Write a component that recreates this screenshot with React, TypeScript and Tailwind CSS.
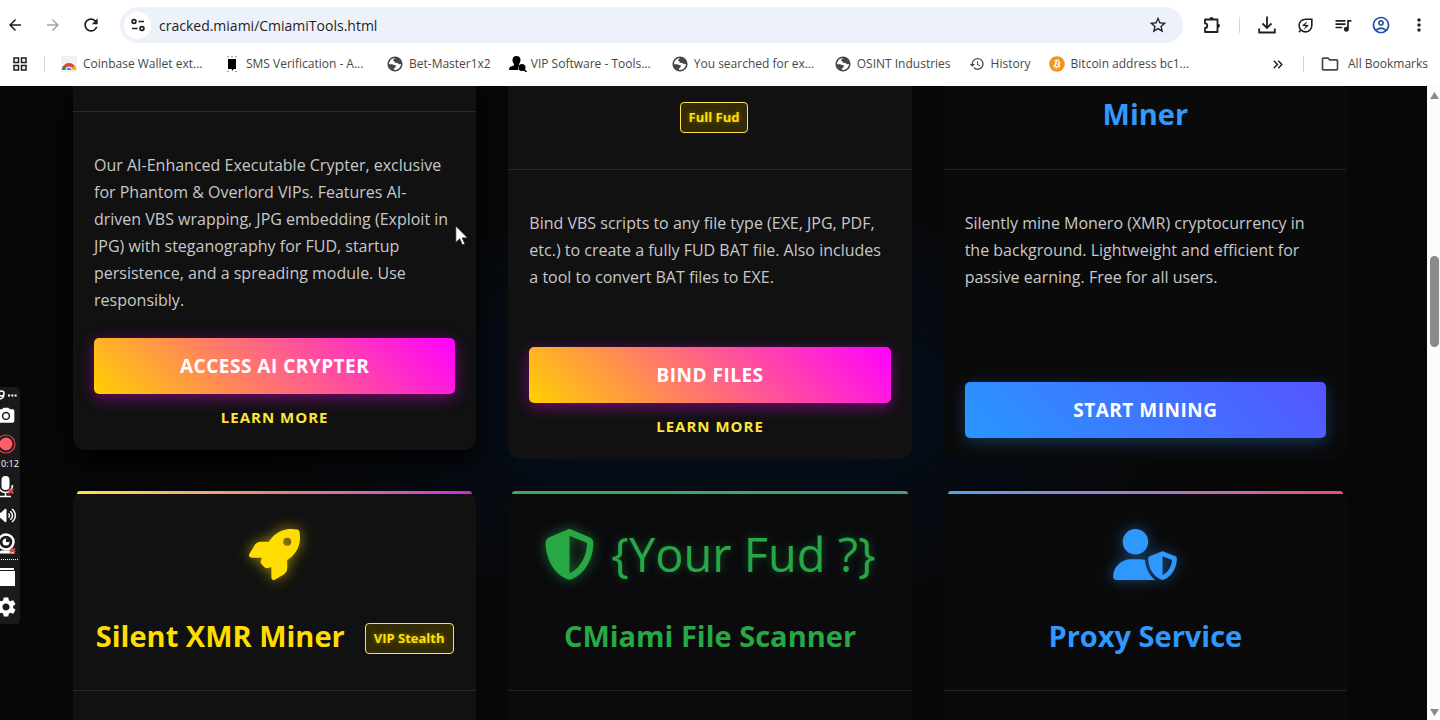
import type { ReactNode } from "react";
import { FaBitcoin, FaRocket, FaShieldHalved, FaUserShield, FaVolumeHigh } from "react-icons/fa6";
import {
  MdArrowBack,
  MdArrowForward,
  MdGridView,
  MdHistory,
  MdMoreVert,
  MdOutlineAccountCircle,
  MdOutlineEnergySavingsLeaf,
  MdOutlineFolder,
  MdPhotoCamera,
  MdQueueMusic,
  MdRefresh,
  MdSettings,
  MdStarBorder,
} from "react-icons/md";

const TuneIcon = () => (
  <svg width="14" height="14" viewBox="0 0 14 14" fill="none" stroke="#1f1f1f" strokeWidth="1.7">
    <circle cx="3" cy="3.5" r="1.9" />
    <path d="M7.5 3.5H13M1 10.5h5.5" />
    <circle cx="11" cy="10.5" r="1.9" />
  </svg>
);

const PuzzleIcon = () => (
  <svg width="20" height="20" viewBox="0 0 20 20" fill="none" stroke="#1f1f1f" strokeWidth="1.8">
    <path d="M3 4.500h12.500v12.500H3v-4a2.300 2.300 0 0 0 0-4.600z" strokeLinejoin="round" />
    <path d="M7.500 4a2 2 0 0 1 4 0zM16 8.700a2 2 0 0 1 0 4z" fill="#1f1f1f" stroke="none" />
  </svg>
);

const DownloadIcon = () => (
  <svg width="18" height="18" viewBox="0 0 18 18" fill="none" stroke="#1f1f1f" strokeWidth="1.8">
    <path d="M9 0.5V11.5M4.5 7.5L9 12L13.5 7.5M1.2 12.5V16.5H16.8V12.5" />
  </svg>
);

const CoinbaseIcon = () => (
  <svg width="16" height="16" viewBox="0 0 16 16">
    <rect width="16" height="16" fill="#f1f1f1" />
    <path d="M1 14a7 7 0 0 1 14 0z" fill="#db4437" />
    <path d="M1 14a7 7 0 0 1 1.500-4.300L7 14z" fill="#0f9d58" />
    <path d="M15 14a7 7 0 0 0-1.500-4.300L9 14z" fill="#f4b400" />
    <path d="M4.500 14a3.500 3.500 0 0 1 7 0z" fill="#fff" />
    <path d="M5.500 14a2.500 2.500 0 0 1 5 0z" fill="#4285f4" />
  </svg>
);

const ChipIcon = () => (
  <svg width="16" height="16" viewBox="0 0 16 16">
    <path d="M4 3h8v10H9.500l-1 2-1-2H4z" fill="#000" />
    <path d="M3 .7h11M3 15.500h3M11 15.500h3" stroke="#999" strokeWidth="1" strokeDasharray="2 2" />
  </svg>
);

const PersonSearchIcon = () => (
  <svg width="18" height="16" viewBox="0 0 18 16" fill="#000">
    <path d="M3.500 4C3.500 1.500 5 0 7.500 0S11.500 1.500 11.500 4c0 2-1 3.500-1.500 4v1.500C9 11 9 12 9.500 14H0c0-3 1.500-3.500 5-4.500V8C4.500 7.500 3.500 6 3.500 4z" />
    <circle cx="13" cy="11.500" r="3.500" />
    <path d="M15 13.500l2.500 2.500" stroke="#000" strokeWidth="1.500" />
  </svg>
);

const Globe = () => (
  <svg width="16" height="16" viewBox="0 0 16 16">
    <circle cx="8" cy="8" r="6.800" fill="none" stroke="#474747" strokeWidth="1.600" />
    <path d="M8.500 1.500c-.5 1.500-2 1.200-2.300 2.500-.3 1.200 1.500 1 1.600 2.200.1 1.300 2.200.3 3.200 1.300s2 .8 3.500.6A6.500 6.500 0 0 0 8.500 1.500z" fill="#474747" />
    <path d="M1.500 8.300c2-.2 3.800-.2 5 .4 1.300.6 2.500.4 2.500 1.600s-1.600 1-1.700 2.200c-.1.800-.6 1.300-1.300 1.800A6.800 6.800 0 0 1 1.500 8.300z" fill="#474747" />
  </svg>
);

const bookmarks = [
  { label: "Coinbase Wallet ext...", icon: <CoinbaseIcon />, wide: true },
  { label: "SMS Verification - A...", icon: <ChipIcon />, wide: true },
  { label: "Bet-Master1x2", icon: <Globe />, wide: false },
  { label: "VIP Software - Tools...", icon: <PersonSearchIcon />, wide: true },
  { label: "You searched for ex...", icon: <Globe />, wide: true },
  { label: "OSINT Industries", icon: <Globe />, wide: false },
  { label: "History", icon: <MdHistory size={16} />, wide: false },
  { label: "Bitcoin address bc1...", icon: <FaBitcoin size={16} className="text-[#f7931a]" />, wide: true },
];

const IconButton = ({ label, children }: { label: string; children: ReactNode }) => (
  <button aria-label={label} className="flex size-[30px] shrink-0 items-center justify-center rounded-full">
    {children}
  </button>
);

const BrowserBar = () => (
  <header className="shrink-0 bg-white pb-2 text-[#1f1f1f]">
    <div className="flex h-[50px] items-center pr-1.5">
      <div className="flex gap-2">
        <IconButton label="Back"><MdArrowBack size={18} /></IconButton>
        <IconButton label="Forward"><MdArrowForward size={18} className="text-[#a5a5a5]" /></IconButton>
        <IconButton label="Reload"><MdRefresh size={20} /></IconButton>
      </div>
      <div className="mx-3.5 flex h-9 flex-1 items-center gap-2 rounded-full bg-[#edf1fa] pr-[15px] pl-1">
        <button aria-label="Site information" className="flex size-[27px] items-center justify-center rounded-full bg-white">
          <TuneIcon />
        </button>
        <input
          aria-label="Address"
          className="min-w-0 flex-1 bg-transparent text-[14px] outline-none"
          defaultValue="cracked.miami/CmiamiTools.html"
        />
        <button aria-label="Bookmark this page"><MdStarBorder size={20} /></button>
      </div>
      <IconButton label="Extensions"><PuzzleIcon /></IconButton>
      <span className="mx-3 h-4 w-px bg-[#c9d8f0]" />
      <div className="flex gap-2">
        <IconButton label="Downloads"><DownloadIcon /></IconButton>
        <IconButton label="Energy saver"><MdOutlineEnergySavingsLeaf size={19} /></IconButton>
        <IconButton label="Media"><MdQueueMusic size={20} /></IconButton>
        <IconButton label="Profile"><MdOutlineAccountCircle size={20} className="text-[#1d4fa8]" /></IconButton>
        <IconButton label="Menu"><MdMoreVert size={20} /></IconButton>
      </div>
    </div>

    <nav className="flex h-7 items-center pr-3 pl-3 text-[12px] whitespace-nowrap text-[#474747]">
      <button aria-label="Apps"><MdGridView size={18} className="-m-px text-[#1f1f1f]" /></button>
      <span className="mx-4 h-4 w-px bg-[#c9d8f0]" />
      <div className="flex flex-1 gap-[18px]">
        {bookmarks.map((b) => (
          <a key={b.label} href="#" className={`flex items-center gap-1.5 ${b.wide ? "w-[145px]" : ""}`}>
            <span className="w-4 shrink-0">{b.icon}</span>
            {b.label}
          </a>
        ))}
      </div>
      <button aria-label="More bookmarks">
        <svg width="10" height="9" viewBox="0 0 10 9" fill="none" stroke="#1f1f1f" strokeWidth="1.400">
          <path d="M.8 .8l3.600 3.700L.8 8.200M5.300 .8l3.600 3.700-3.600 3.700" />
        </svg>
      </button>
      <span className="mr-4 ml-5 h-4 w-px bg-[#c9d8f0]" />
      <a href="#" className="flex items-center gap-2">
        <MdOutlineFolder size={20} />
        All Bookmarks
      </a>
    </nav>
  </header>
);

const Badge = ({ children }: { children: ReactNode }) => (
  <span className="flex h-[31px] items-center rounded-[4px] border border-[#ffe14d] bg-[#332b06] px-2 text-[13px] font-bold text-[#ffe000] [text-shadow:0_0_4px_rgba(255,224,0,0.4)]">
    {children}
  </span>
);

interface ToolCardProps {
  header: ReactNode;
  headerClass: string;
  cardClass: string;
  text: string;
  action: string;
  actionClass: string;
  learnMore?: boolean;
}

const ToolCard = ({ header, headerClass, cardClass, text, action, actionClass, learnMore }: ToolCardProps) => (
  <article className={`flex flex-col rounded-b-xl ${cardClass}`}>
    <div className={`flex justify-center border-b border-white/10 ${headerClass}`}>{header}</div>
    <div className="flex flex-1 flex-col px-[21px] pt-10">
      <p className="mb-6 text-[16px] leading-[27px] whitespace-pre text-[#c8c8c8]">{text}</p>
      <button
        className={`mt-auto h-14 rounded-[5px] text-[19px] font-bold tracking-[0.5px] text-white uppercase ${actionClass}`}
      >
        {action}
      </button>
      {learnMore ? (
        <a href="#" className="mt-[13px] mb-[23px] text-center text-[15px] leading-5 font-bold tracking-[1px] text-[#ffe53b] uppercase">
          Learn More
        </a>
      ) : (
        <div className="h-[21px]" />
      )}
    </div>
  </article>
);

interface ServiceCardProps {
  bar: string;
  cardClass: string;
  iconClass: string;
  icon: ReactNode;
  title: string;
  badge?: string;
}

const ServiceCard = ({ bar, cardClass, iconClass, icon, title, badge }: ServiceCardProps) => (
  <article className={`rounded-t-xl ${cardClass}`}>
    <div className={`mx-1 h-[3px] rounded-t-[3px] ${bar}`} />
    <div className={`border-b border-white/10 pt-[35px] pb-9 ${iconClass}`}>
      <div className="flex h-[51px] items-center justify-center gap-4">{icon}</div>
      <div className="mt-[38px] flex h-9 items-end justify-center gap-5 whitespace-nowrap">
        <h3 className="text-[29px] leading-9 font-bold">{title}</h3>
        {badge && <Badge>{badge}</Badge>}
      </div>
    </div>
    <div className="h-24" />
  </article>
);

const pinkButton =
  "bg-[linear-gradient(45deg,#ffd000,#ff00ff)] shadow-[0_4px_15px_rgba(255,0,255,0.4)]";

const ToolGrid = () => (
  <main className="relative min-w-0 flex-1 overflow-hidden bg-[#070707] bg-[radial-gradient(ellipse_at_center,#07101a_0%,#050b14_25%,#070707_50%)] pr-20 pl-[73px]">
    <div className="grid grid-cols-3 gap-8">
      <ToolCard
        header={null}
        headerClass="h-[26px]"
        cardClass="mb-[9px] bg-[#111111] shadow-[0_10px_24px_#000000]"
        text={
          "Our AI-Enhanced Executable Crypter, exclusive\nfor Phantom & Overlord VIPs. Features AI-\ndriven VBS wrapping, JPG embedding (Exploit in\nJPG) with steganography for FUD, startup\npersistence, and a spreading module. Use\nresponsibly."
        }
        action="Access AI Crypter"
        actionClass={pinkButton}
        learnMore
      />
      <ToolCard
        header={<Badge>Full Fud</Badge>}
        headerClass="h-[84px] pt-4 pl-2"
        cardClass="bg-[#111112]"
        text={
          "Bind VBS scripts to any file type (EXE, JPG, PDF,\netc.) to create a fully FUD BAT file. Also includes\na tool to convert BAT files to EXE."
        }
        action="Bind Files"
        actionClass={pinkButton}
        learnMore
      />
      <ToolCard
        header={<h3 className="text-[29px] leading-9 font-bold text-[#3399ff]">Miner</h3>}
        headerClass="h-[84px] pt-2.5"
        cardClass="bg-[#0a0a0b]"
        text={
          "Silently mine Monero (XMR) cryptocurrency in\nthe background. Lightweight and efficient for\npassive earning. Free for all users."
        }
        action="Start Mining"
        actionClass="bg-[linear-gradient(45deg,#2897ff,#5555ff)] shadow-[0_4px_15px_rgba(40,151,255,0.3)]"
      />

      <ServiceCard
        bar="bg-linear-to-r from-[#ffe53b] via-[#e8827c] to-[#c726d8]"
        cardClass="bg-[#111111]"
        iconClass="text-[#ffdd00]"
        icon={<FaRocket size={51} className="drop-shadow-[0_0_7px_rgba(255,221,0,0.6)]" />}
        title="Silent XMR Miner"
        badge="VIP Stealth"
      />
      <ServiceCard
        bar="bg-linear-to-r from-[#3fa85c] to-[#45a078]"
        cardClass="bg-[#0b0b0e]"
        iconClass="text-[#28a745]"
        icon={
          <>
            <FaShieldHalved size={51} className="drop-shadow-[0_0_6px_rgba(40,167,69,0.6)]" />
            <span className="text-[47px] whitespace-nowrap [text-shadow:0_0_8px_rgba(40,167,69,0.4)]">{"{Your Fud ?}"}</span>
          </>
        }
        title="CMiami File Scanner"
      />
      <ServiceCard
        bar="bg-linear-to-r from-[#4aa5e8] via-[#a578cf] to-[#ec4878]"
        cardClass="bg-[#0a0a0b]"
        iconClass="text-[#2f98ff]"
        icon={<FaUserShield size={51} className="h-[51px] w-16 drop-shadow-[0_0_7px_rgba(47,152,255,0.45)]" />}
        title="Proxy Service"
      />
    </div>
  </main>
);

const Scrollbar = () => (
  <div className="flex w-[13px] shrink-0 flex-col items-center bg-[#fcfcfc] pl-0.5">
    <svg width="9" height="20" viewBox="0 0 9 20" fill="#8b8b8b">
      <path d="M4.500 6L9 13H0z" />
    </svg>
    <div className="mt-[150px] h-[91px] w-[9px] rounded-full bg-[#8b8b8b]" />
    <svg width="9" height="16" viewBox="0 0 9 16" fill="#8b8b8b" className="mt-auto">
      <path d="M4.500 12L9 5H0z" />
    </svg>
  </div>
);

// Screen recorder strip, docked half off the left edge
const RecorderStrip = () => (
  <aside className="absolute top-[387px] -left-2 flex h-[237px] w-7 flex-col items-center rounded-r bg-[#1a1a1a] text-white">
    <svg width="28" height="17" viewBox="0 0 28 17" fill="none" stroke="#fff">
      <path d="M12 6.500a2.500 2.500 0 1 0-5 0a2.500 2.500 0 0 0 5 0c0 3-1.500 5-4 5.500" strokeWidth="1.500" />
      <path d="M16 8.500h9" strokeWidth="2" strokeDasharray="2 1.300" />
    </svg>
    <button aria-label="Screenshot" className="mt-0.5"><MdPhotoCamera size={20} /></button>
    <button aria-label="Record" className="mt-2">
      <svg width="20" height="20" viewBox="0 0 20 20">
        <circle cx="10" cy="10" r="9" fill="none" stroke="#e0454f" strokeWidth="1.200" />
        <circle cx="10" cy="10" r="6.500" fill="#ff5f6b" />
      </svg>
    </button>
    <span className="mt-1 pl-2 text-[9px] leading-3">0:12</span>
    <button aria-label="Microphone" className="mt-1.5">
      <svg width="20" height="22" viewBox="0 0 20 22" fill="none">
        <rect x="5.500" y="0" width="8" height="14" rx="4" fill="#fff" />
        <path d="M2.500 9c0 10 14 10 14 0M9.500 17v4M4 20.500h11" stroke="#fff" strokeWidth="1.600" />
        <path d="M12 17.500l5-4.500M13 13l4 4.500" stroke="#e0454f" strokeWidth="2.200" />
      </svg>
    </button>
    <button aria-label="Speaker" className="mt-2"><FaVolumeHigh size={19} /></button>
    <button aria-label="Webcam" className="mt-2">
      <svg width="22" height="22" viewBox="0 0 22 22" fill="none">
        <circle cx="11" cy="9" r="7.500" stroke="#fff" strokeWidth="2.500" />
        <circle cx="11" cy="9" r="3.500" fill="#fff" />
        <path d="M11 9V5.500h3.500V9z" fill="#1a1a1a" />
        <path d="M2 20.500l4-3h10l4 3z" fill="#fff" />
        <path d="M15 19.500l5-4M16 15.500l4 4" stroke="#e0454f" strokeWidth="2" />
      </svg>
    </button>
    <div className="mt-1 w-6 border-t border-dotted border-white" />
    <svg width="28" height="19" viewBox="0 0 28 19" fill="#fff" className="mt-2">
      <path d="M2 0h20v2H2zM2 3h21v15H2z" />
    </svg>
    <button aria-label="Settings" className="mt-2"><MdSettings size={24} /></button>
  </aside>
);

const App = () => (
  <div className="relative flex h-screen flex-col overflow-hidden bg-[#070707] font-['Open_Sans','Noto_Sans',sans-serif]">
    <BrowserBar />
    <div className="flex min-h-0 flex-1">
      <ToolGrid />
      <Scrollbar />
    </div>
    <RecorderStrip />
    <svg width="14" height="21" viewBox="0 0 14 21" className="absolute top-[225px] left-[455px]">
      <path d="M.8 1v16.500l3.900-3.700 2.700 6.200 2.500-1.100-2.700-6h5.400z" fill="#fff" stroke="#222" strokeWidth=".8" />
    </svg>
  </div>
);

export default App;
